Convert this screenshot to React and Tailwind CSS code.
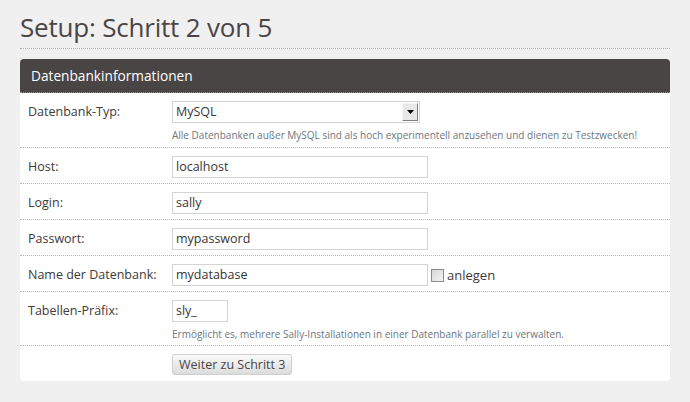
import React from "react";

const font = { fontFamily: '"Open Sans", "Noto Sans", sans-serif' };

function Row({ label, children, hint, h }) {
  return (
    <div className={`flex border-b border-dotted border-[#b5b5b5] ${h}`}>
      <div className="w-[152px] shrink-0 pl-[8px] pt-[10px] text-[12.5px] leading-[18px] text-[#403a3a]">{label}</div>
      <div className="flex flex-col pt-[8px]">
        <div className="flex items-center">{children}</div>
        {hint && <div className="mt-[5px] text-[10px] leading-[14px] text-[#6d7680]">{hint}</div>}
      </div>
    </div>
  );
}

function Input({ value, w }) {
  return (
    <div className={`${w} h-[22px] border border-[#d4d4d4] bg-white px-[3px] text-[12.5px] leading-[20px] text-[#3a3535]`}>{value}</div>
  );
}

export default function App() {
  return (
    <div className="w-[690px] h-[402px] bg-[#f0f0f0] px-[20px] pt-[9px]" style={font}>
      <div className="border-b border-dotted border-[#b0b0b0] pb-[3px]">
        <h1 className="text-[26px] leading-[36px] tracking-[-0.2px] text-[#4a4545]">Setup: Schritt 2 von 5</h1>
      </div>
      <div className="mt-[10px] rounded-[4px] bg-white">
        <div className="h-[34px] rounded-t-[4px] bg-[#4a4545] pl-[11px] text-[13.7px] leading-[34px] text-white border-b border-dotted border-[#999]">
          Datenbankinformationen
        </div>
        <Row label="Datenbank-Typ:" h="h-[55px]" hint="Alle Datenbanken außer MySQL sind als hoch experimentell anzusehen und dienen zu Testzwecken!">
          <div className="flex h-[22px] w-[248px] items-stretch border border-[#d4d4d4] bg-white">
            <div className="flex-1 px-[3px] text-[12.5px] leading-[20px] text-[#3a3535]">MySQL</div>
            <div className="my-[1px] mr-[1px] flex w-[16px] items-center justify-center border border-t-[#f5f5f5] border-l-[#f5f5f5] border-r-[#808080] border-b-[#808080] bg-[#e8e8e8]">
              <svg width="7" height="4" viewBox="0 0 7 4"><path d="M0 0h7L3.5 4z" fill="#000" /></svg>
            </div>
          </div>
        </Row>
        <Row label="Host:" h="h-[36px]"><Input value="localhost" w="w-[256px]" /></Row>
        <Row label="Login:" h="h-[36px]"><Input value="sally" w="w-[256px]" /></Row>
        <Row label="Passwort:" h="h-[36px]"><Input value="mypassword" w="w-[256px]" /></Row>
        <Row label="Name der Datenbank:" h="h-[36px]">
          <Input value="mydatabase" w="w-[256px]" />
          <div className="ml-[3px] h-[13px] w-[13px] border border-[#8a8a8a] bg-gradient-to-br from-[#d8d8d8] to-[#f4f4f4]" />
          <span className="ml-[3px] text-[13px] leading-[18px] text-[#403a3a]">anlegen</span>
        </Row>
        <Row label="Tabellen-Präfix:" h="h-[54px]" hint="Ermöglicht es, mehrere Sally-Installationen in einer Datenbank parallel zu verwalten.">
          <Input value="sly_" w="w-[56px]" />
        </Row>
        <div className="flex h-[35px] pl-[152px] pt-[8px]">
          <button className="h-[21px] rounded-[3px] border border-[#cfcfcf] bg-gradient-to-b from-[#fafafa] to-[#dcdcdc] px-[6px] text-[12.5px] leading-[18px] text-[#4a4545]" style={font}>
            Weiter zu Schritt 3
          </button>
        </div>
      </div>
    </div>
  );
}
